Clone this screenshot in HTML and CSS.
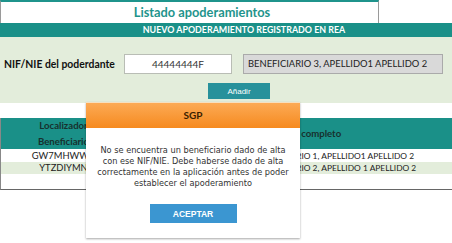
FILE: index.html
```html
<!DOCTYPE html>
<html lang="es">
<head>
<meta charset="utf-8">
<title>Listado apoderamientos</title>
<link rel="stylesheet" href="styles.css">
</head>
<body>
<div class="page">
  <div class="title-box">Listado apoderamientos</div>
  <div class="bar">NUEVO APODERAMIENTO REGISTRADO EN REA</div>
  <div class="panel">
    <div class="form-row">
      <label class="label">NIF/NIE del poderdante</label>
      <div class="input">44444444F</div>
      <div class="readonly">BENEFICIARIO 3, APELLIDO1 APELLIDO 2</div>
    </div>
    <div class="actions">
      <button class="btn-add">Añadir</button>
    </div>
  </div>
  <div class="table">
    <div class="thead">
      <div class="th col1">Localizador<br>Beneficiario</div>
      <div class="th col2">Nombre completo</div>
    </div>
    <div class="tr">
      <div class="td col1">GW7MHWWK</div>
      <div class="td col2">BENEFICIARIO 1, APELLIDO1 APELLIDO 2</div>
    </div>
    <div class="tr alt">
      <div class="td col1">YTZDIYMN</div>
      <div class="td col2">BENEFICIARIO 2, APELLIDO 1 APELLIDO 2</div>
    </div>
  </div>
  <div class="dialog">
    <div class="dialog-head">SGP</div>
    <div class="dialog-body">
      <p class="msg">No se encuentra un beneficiario dado de alta con ese NIF/NIE. Debe haberse dado de alta correctamente en la aplicación antes de poder establecer el apoderamiento</p>
      <button class="btn-ok">ACEPTAR</button>
    </div>
  </div>
</div>
</body>
</html>
```

FILE: styles.css
```css
* { box-sizing: border-box; }
html, body { margin: 0; padding: 0; background: #fff; }
body { font-family: "Lato", "Liberation Sans", sans-serif; color: #222; }
.page { position: relative; width: 452px; height: 243px; overflow: hidden; }

.title-box {
  width: 379px; height: 23px;
  border-top: 2px solid #1f948c;
  border-left: 1px solid #9a9a9a;
  border-right: 1px solid #9a9a9a;
  text-align: center;
  color: #1f948c;
  font-weight: bold;
  font-size: 12.8px;
  line-height: 20px;
  padding-left: 25px;
}
.bar {
  height: 14px;
  background: #1a9088;
  color: #fff;
  font-weight: bold;
  font-size: 8.9px;
  line-height: 14px;
  text-align: center;
  padding-left: 36px;
}
.panel {
  height: 66px;
  background: #e3eddb;
  padding-top: 17px;
}
.form-row { display: flex; align-items: center; height: 20px; }
.label { font-weight: bold; font-size: 10.4px; color: #111; padding-left: 4px; width: 124px; white-space: nowrap; }
.input {
  width: 108px; height: 20px;
  background: #fff;
  border: 1px solid #b9bdb5;
  text-align: center;
  font-size: 10px; line-height: 18px; color: #333;
}
.readonly {
  margin-left: 11px;
  width: 200px; height: 20px;
  background: #d9d9d9;
  border: 1px solid #aaa;
  font-size: 9.4px; line-height: 18px; color: #222;
  padding-left: 4px;
  white-space: nowrap;
}
.actions { display: flex; padding-left: 208px; margin-top: 9px; }
.btn-add {
  width: 62px; height: 16px;
  background: #27919b;
  border: 0; padding: 0;
  color: #fff;
  font-family: "Liberation Sans", sans-serif;
  font-size: 8px;
}

.table {
  margin-top: 15px;
  height: 72px;
  border-left: 1px solid #888;
  border-bottom: 1px solid #666;
}
.thead { display: flex; height: 31px; background: #1a9088; align-items: center; }
.th { font-weight: bold; font-size: 9.6px; color: #17302e; line-height: 16px; white-space: nowrap; }
.tr { display: flex; height: 13px; align-items: center; }
.tr.alt { height: 12px; background: #e3eddb; }
.td { font-size: 8.4px; color: #222; line-height: 12px; white-space: nowrap; }
.td.col1 { font-size: 9.4px; }
.col1 { width: 125px; text-align: center; }
.col2 { flex: 1; padding-left: 128px; }
.th.col2 { padding-left: 138px; }

.dialog {
  position: absolute;
  left: 86px; top: 102px;
  width: 214px; height: 136px;
  background: #fff;
  box-shadow: 0 1px 2px rgba(0,0,0,0.35);
  display: flex; flex-direction: column;
}
.dialog-head {
  height: 26px;
  background: linear-gradient(#fcaa55, #f68a1f);
  border-top: 1px solid #f6e0c0;
  color: #3a1e00;
  font-weight: bold;
  font-size: 10px;
  text-align: center;
  line-height: 25px;
}
.dialog-body {
  flex: 1;
  display: flex; flex-direction: column; align-items: center;
  padding-top: 17px;
}
.msg {
  margin: 0;
  width: 200px;
  text-align: center;
  font-family: "DejaVu Sans", sans-serif;
  font-size: 8.2px;
  line-height: 11px;
  color: #333;
}
.btn-ok {
  margin-top: 15px;
  width: 87px; height: 19px;
  background: #3b96d1;
  border: 0; padding: 0;
  color: #fff;
  font-family: "Liberation Sans", sans-serif;
  font-size: 8.5px;
  font-weight: bold;
}
```
